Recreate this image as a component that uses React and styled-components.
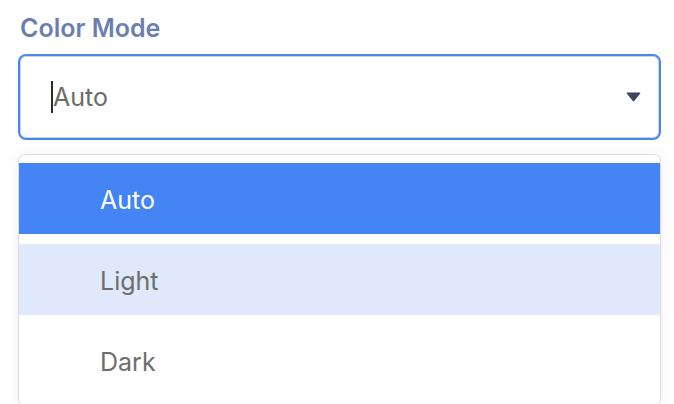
import React from "react";
import styled, { createGlobalStyle } from "styled-components";

const Global = createGlobalStyle`
  html, body { margin: 0; padding: 0; background: #ffffff; }
  body { font-family: "Inter", "Noto Sans", sans-serif; -webkit-font-smoothing: antialiased; }
`;

const Field = styled.div`
  margin-left: 18px;
  width: 643px;
  padding-top: 14px;
  display: flex;
  flex-direction: column;
`;

const Label = styled.label`
  font-size: 25px;
  line-height: 28px;
  font-weight: 600;
  color: #6a7fb0;
  padding-left: 2px;
  margin-bottom: 12px;
`;

const Control = styled.div`
  box-sizing: border-box;
  height: 86px;
  border: 2px solid #4a86f0;
  border-radius: 8px;
  box-shadow: inset 0 0 0 1px #cdd1db;
  display: flex;
  align-items: center;
  padding: 0 18px 0 31px;
`;

const Caret = styled.span`
  width: 2px;
  height: 32px;
  background: #2b2b2b;
`;

const Value = styled.span`
  flex: 1;
  font-size: 25px;
  color: #6b6b6b;
  line-height: 32px;
`;

const Arrow = styled.svg`
  width: 15px;
  height: 10px;
  display: block;
`;

const Menu = styled.ul`
  list-style: none;
  margin: 14px 0 0;
  box-sizing: border-box;
  border: 1px solid #dcdcdc;
  border-radius: 7px;
  box-shadow: 0 2px 14px rgba(0, 0, 0, 0.07);
  padding: 8px 0 9px;
  display: flex;
  flex-direction: column;
  gap: 10px;
  background: #fff;
`;

const Item = styled.li`
  box-sizing: border-box;
  height: 71px;
  display: flex;
  align-items: center;
  padding: 3px 0 0 81px;
  font-size: 25px;
  color: ${(p) => (p.$selected ? "#ffffff" : "#6e6e6e")};
  background: ${(p) => (p.$selected ? "#4484f4" : p.$hover ? "#dfe9fb" : "transparent")};
`;

export default function App() {
  const options = ["Auto", "Light", "Dark"];
  return (
    <>
      <Global />
      <Field>
        <Label>Color Mode</Label>
        <Control>
          <Caret />
          <Value>Auto</Value>
          <Arrow viewBox="0 0 15 10">
            <path d="M1.2 0.5 H13.8 Q14.8 0.5 14.2 1.4 L8.2 9.1 Q7.5 10 6.8 9.1 L0.8 1.4 Q0.2 0.5 1.2 0.5 Z" fill="#3e4562" />
          </Arrow>
        </Control>
        <Menu>
          {options.map((o, i) => (
            <Item key={o} $selected={i === 0} $hover={i === 1}>
              {o}
            </Item>
          ))}
        </Menu>
      </Field>
    </>
  );
}
